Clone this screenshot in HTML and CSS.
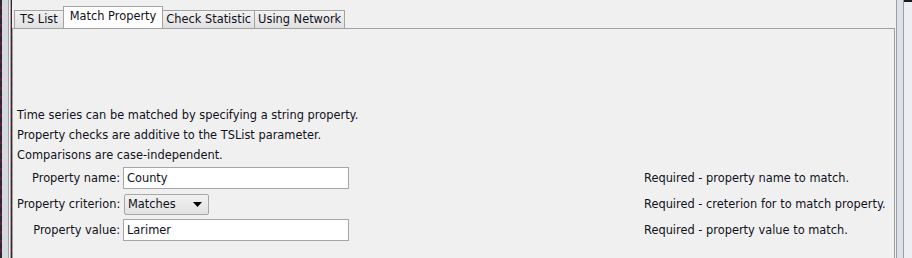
FILE: index.html
```html
<!DOCTYPE html>
<html lang="en">
<head>
    <meta charset="UTF-8">
    <title>Match Property</title>
    <link rel="stylesheet" href="styles.css">
</head>
<body>
    <div class="frame">
        <div class="edge"></div>

        <div class="main">
            <div class="tabs">
                <div class="tab first">TS List</div>
                <div class="tab selected">Match Property</div>
                <div class="tab">Check Statistic</div>
                <div class="tab">Using Network</div>
            </div>

            <div class="panel">
                <p class="line">Time series can be matched by specifying a string property.</p>
                <p class="line">Property checks are additive to the TSList parameter.</p>
                <p class="line">Comparisons are case-independent.</p>

                <div class="form">
                    <label class="label">Property name:</label>
                    <div class="field"><div class="input">County</div></div>
                    <div class="note">Required - property name to match.</div>

                    <label class="label">Property criterion:</label>
                    <div class="field">
                        <div class="combo">
                            <span>Matches</span>
                            <svg class="arrow" width="9" height="5" viewBox="0 0 9 5"><path d="M0 0h9L4.5 5z" fill="#000"/></svg>
                        </div>
                    </div>
                    <div class="note">Required - creterion for to match property.</div>

                    <label class="label">Property value:</label>
                    <div class="field"><div class="input">Larimer</div></div>
                    <div class="note">Required - property value to match.</div>
                </div>
            </div>
        </div>

        <div class="scroll"></div>
    </div>
</body>
</html>
```

FILE: styles.css
```css
html, body {
    margin: 0;
    padding: 0;
}
body {
    width: 912px;
    height: 258px;
    overflow: hidden;
    background-color: #f0f0f0;
    font-family: 'DejaVu Sans', sans-serif;
    font-size: 11.4px;
    color: #101020;
}
.frame {
    display: flex;
    height: 258px;
}

/* left window edge */
.edge {
    width: 12px;
    flex: none;
    background:
        linear-gradient(to right, transparent 8px, #a0a0a0 8px, #a0a0a0 9px, #f0f0f0 9px, #f0f0f0 10px, #a0a0a0 10px, #a0a0a0 11px, transparent 11px),
        linear-gradient(to right, transparent 2px, #d6d9de 2px, #d6d9de 8px, transparent 8px),
        repeating-linear-gradient(to bottom, #2a2a2a 0, #2a2a2a 6px, #6b1456 6px, #6b1456 9px);
}

.main {
    flex: 1;
    display: flex;
    flex-direction: column;
    padding-top: 6px;
}

/* tabs */
.tabs {
    display: flex;
    align-items: flex-end;
    height: 22px;
    padding-left: 2px;
}
.tab {
    height: 17px;
    line-height: 17px;
    padding: 0 3px;
    border: 1px solid #a3a3a3;
    border-bottom: none;
    margin-right: -1px;
    background: linear-gradient(#f2f2f2, #e0e0e0);
    white-space: nowrap;
}
.tab.first {
    padding: 0 5px;
}
.tab.selected {
    height: 21px;
    line-height: 19px;
    background: #fff;
    padding: 0 6px;
    position: relative;
    z-index: 1;
}

.panel {
    flex: 1;
    border: 1px solid #a0a0a0;
    border-bottom: none;
    padding: 76px 0 0 4px;
    margin-right: 0;
}
.line {
    margin: 0;
    height: 20px;
    line-height: 20px;
}

/* form rows */
.form {
    display: grid;
    grid-template-columns: 103px 226px 289px auto;
    grid-auto-rows: 26px;
    column-gap: 3px;
    align-items: center;
}
.label {
    text-align: right;
    white-space: nowrap;
}
.field {
    display: flex;
}
.input {
    width: 100%;
    height: 20px;
    line-height: 20px;
    border: 1px solid #a5a5a5;
    background: #fff;
    padding-left: 3px;
    box-sizing: content-box;
}
.combo {
    width: 85px;
    height: 21px;
    line-height: 21px;
    margin-left: 1px;
    border: 1px solid #a7a7a7;
    border-radius: 2px;
    background: linear-gradient(#f1f1f1, #e2e2e2);
    display: flex;
    align-items: center;
    justify-content: space-between;
    padding: 0 4px 0 3px;
    box-sizing: border-box;
}
.arrow {
    margin-right: 2px;
}
.note {
    grid-column: 4;
    white-space: nowrap;
}

/* right side strip */
.scroll {
    width: 17px;
    flex: none;
    background:
        linear-gradient(to bottom, #1a1a1a 0, #1a1a1a 2px, transparent 2px) 9px 0 / 8px 100% no-repeat,
        linear-gradient(to right, #f0f0f0 0, #f0f0f0 1px, #9a9ea6 1px, #9a9ea6 2px, #dde2ea 2px, #dde2ea 8px, #9a9ea6 8px, #9a9ea6 9px, #eceef2 9px);
}
```
